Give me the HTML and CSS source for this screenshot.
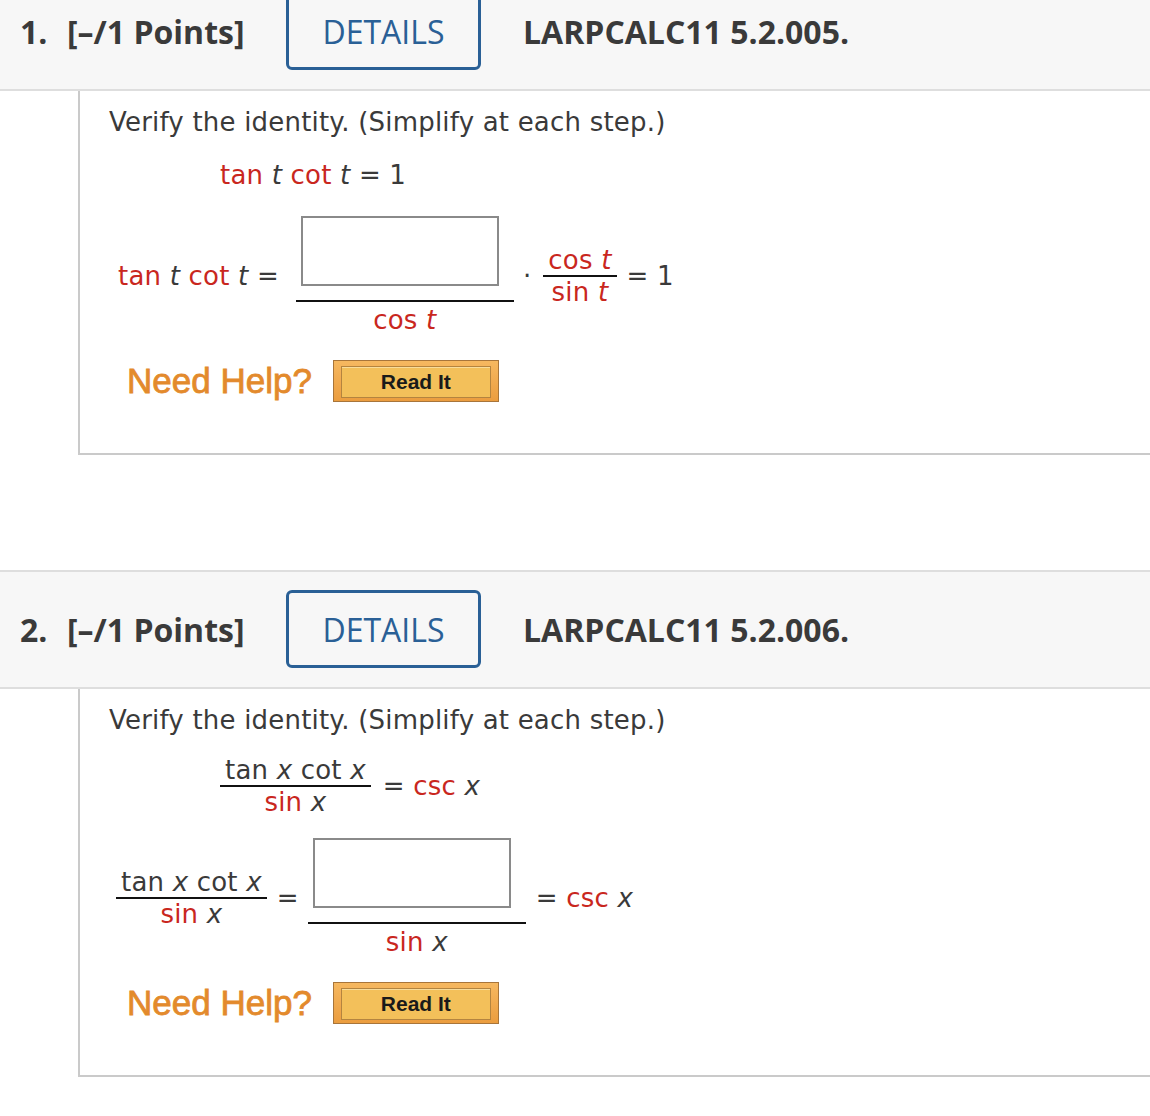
FILE: index.html
```html
<!DOCTYPE html>
<html lang="en">
<head>
    <meta charset="UTF-8">
    <title>LARPCALC11 5.2</title>
    <link rel="stylesheet" href="styles.css">
</head>
<body>
    <div class="page">

        <!-- question 1 -->
        <div class="question">
            <div class="q-head">
                <span class="q-num">1.</span>
                <span class="q-points">[&ndash;/1 Points]</span>
                <button class="details">DETAILS</button>
                <span class="q-code">LARPCALC11 5.2.005.</span>
            </div>
            <div class="q-body">
                <p class="prompt">Verify the identity. (Simplify at each step.)</p>

                <div class="eq eq-given">
                    <span><span class="fn">tan</span> <i>t</i> <span class="fn">cot</span> <i>t</i> = 1</span>
                </div>

                <div class="eq eq-work">
                    <span class="lhs"><span class="fn">tan</span> <i>t</i> <span class="fn">cot</span> <i>t</i> =</span>
                    <span class="frac frac-big">
                        <span class="num"><span class="answer"></span></span>
                        <span class="den"><span class="fn">cos <i>t</i></span></span>
                    </span>
                    <span class="dot">&middot;</span>
                    <span class="frac">
                        <span class="num"><span class="fn">cos <i>t</i></span></span>
                        <span class="den"><span class="fn">sin <i>t</i></span></span>
                    </span>
                    <span class="rhs">= 1</span>
                </div>

                <div class="help">
                    <span class="need-help">Need Help?</span>
                    <button class="read-it"><span>Read It</span></button>
                </div>
            </div>
        </div>

        <!-- question 2 -->
        <div class="question">
            <div class="q-head">
                <span class="q-num">2.</span>
                <span class="q-points">[&ndash;/1 Points]</span>
                <button class="details">DETAILS</button>
                <span class="q-code">LARPCALC11 5.2.006.</span>
            </div>
            <div class="q-body">
                <p class="prompt">Verify the identity. (Simplify at each step.)</p>

                <div class="eq eq-given">
                    <span class="frac">
                        <span class="num">tan <i>x</i> cot <i>x</i></span>
                        <span class="den"><span class="fn">sin</span> <i>x</i></span>
                    </span>
                    <span class="rhs">= <span class="fn">csc</span> <i>x</i></span>
                </div>

                <div class="eq eq-work eq-work2">
                    <span class="frac">
                        <span class="num">tan <i>x</i> cot <i>x</i></span>
                        <span class="den"><span class="fn">sin</span> <i>x</i></span>
                    </span>
                    <span class="rhs">=</span>
                    <span class="frac frac-big">
                        <span class="num"><span class="answer"></span></span>
                        <span class="den"><span class="fn">sin</span> <i>x</i></span>
                    </span>
                    <span class="rhs">= <span class="fn">csc</span> <i>x</i></span>
                </div>

                <div class="help">
                    <span class="need-help">Need Help?</span>
                    <button class="read-it"><span>Read It</span></button>
                </div>
            </div>
        </div>

    </div>
</body>
</html>
```

FILE: styles.css
```css
/* webassign question blocks */
body {
    margin: 0;
    background: #fff;
    color: #3a3a3a;
    font-family: "DejaVu Sans", Verdana, sans-serif;
    font-size: 26px;
}

.page {
    margin-top: -28px;
}

.question + .question {
    margin-top: 115px;
}

/* header bar */
.q-head {
    display: flex;
    align-items: center;
    background: #f7f7f7;
    border-top: 2px solid #dedede;
    border-bottom: 2px solid #dedede;
    padding: 18px 0 19px 20px;
    font-family: "Open Sans", sans-serif;
    font-weight: 700;
    font-size: 32px;
    color: #3a3a3a;
}

.q-num {
    width: 47px;
}

.q-points {
    width: 219px;
}

.details {
    box-sizing: border-box;
    width: 195px;
    height: 78px;
    margin-right: 42px;
    border: 3px solid #2a6096;
    border-radius: 6px;
    background: transparent;
    color: #2a6096;
    font-family: "Open Sans", sans-serif;
    font-weight: 500;
    font-size: 32px;
    padding: 0;
    cursor: pointer;
}

/* body */
.q-body {
    margin-left: 78px;
    border-left: 2px solid #cacaca;
    border-bottom: 2px solid #cacaca;
    padding: 16px 0 51px 29px;
    letter-spacing: 0.2px;
}

.prompt {
    margin: 0;
    line-height: 30px;
}

.fn {
    color: #c9271e;
}

i {
    font-style: italic;
}

.eq {
    display: flex;
    align-items: center;
    line-height: 30px;
    white-space: nowrap;
}

.eq-given {
    margin: 23px 0 0 111px;
}

.eq-work {
    margin: 26px 0 0 9px;
}

.question + .question .eq-given {
    margin-top: 20px;
}

.question + .question .eq-work {
    margin-top: 21px;
    margin-left: 7px;
}

/* fractions */
.frac {
    display: inline-flex;
    flex-direction: column;
    align-items: stretch;
    text-align: center;
}

.frac .num {
    padding: 0 5px;
    border-bottom: 2px solid #111;
}

.frac .den {
    padding: 0 5px;
}

.eq-given .rhs {
    margin-left: 12px;
}

.eq-work .lhs {
    margin-right: 17px;
}

.frac-big .num {
    padding: 0 15px 14px 5px;
}

.frac-big .den {
    padding-top: 3px;
}

.answer {
    display: block;
    box-sizing: border-box;
    width: 198px;
    height: 70px;
    border: 2px solid #8a8a8a;
    background: #fff;
}

.dot {
    margin: 0 12px 0 9px;
}

.eq-work .rhs {
    margin-left: 10px;
}

.eq-work2 .rhs {
    margin: 0 9px 0 10px;
}

.eq-work2 .rhs:last-child {
    margin-right: 0;
}

/* help row */
.help {
    display: flex;
    align-items: center;
    margin: 25px 0 0 18px;
    letter-spacing: 0;
}

.need-help {
    font-family: "Liberation Sans", Arial, sans-serif;
    font-size: 35px;
    color: #e38a2c;
    -webkit-text-stroke: 0.8px #e38a2c;
    margin-right: 21px;
}

.read-it {
    box-sizing: border-box;
    width: 166px;
    height: 42px;
    padding: 5px 7px;
    border: 1px solid #a8753a;
    background: linear-gradient(#f6b860, #eb9d3f);
    cursor: pointer;
}

.read-it span {
    display: flex;
    align-items: center;
    justify-content: center;
    height: 100%;
    border: 1px solid #b4843f;
    background: #f3c05a;
    box-shadow: inset 0 1px 0 #f9dc9a;
    font-family: "Liberation Sans", Arial, sans-serif;
    font-weight: 700;
    font-size: 21px;
    color: #1a1a1a;
}
```
